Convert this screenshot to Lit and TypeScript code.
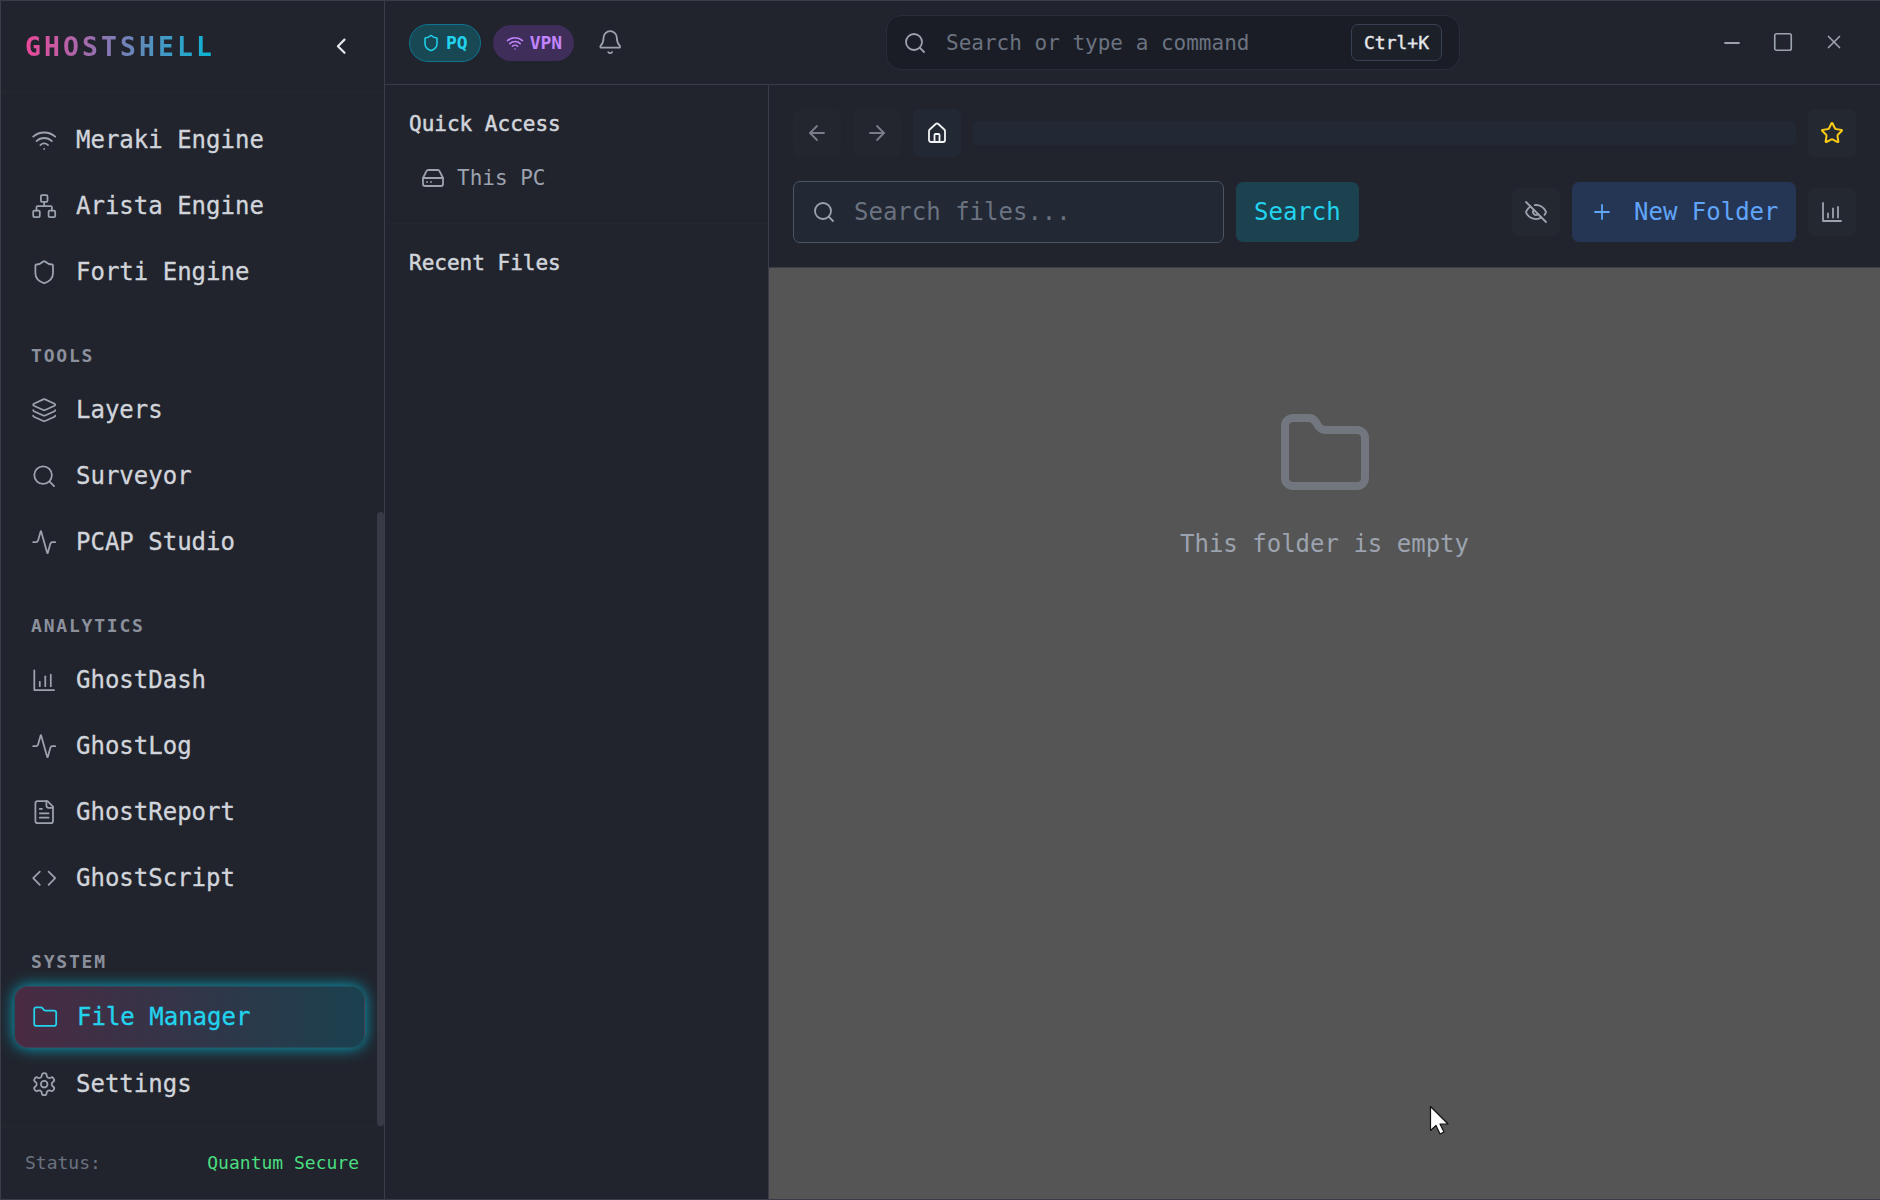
import { LitElement, html, css, svg } from 'lit';
import { customElement } from 'lit/decorators.js';

const ICONS: Record<string, unknown> = {
  wifi: svg`<path d="M12 20h.01"/><path d="M2 8.82a15 15 0 0 1 20 0"/><path d="M5 12.859a10 10 0 0 1 14 0"/><path d="M8.5 16.429a5 5 0 0 1 7 0"/>`,
  network: svg`<rect x="16" y="16" width="6" height="6" rx="1"/><rect x="2" y="16" width="6" height="6" rx="1"/><rect x="9" y="2" width="6" height="6" rx="1"/><path d="M5 16v-3a1 1 0 0 1 1-1h12a1 1 0 0 1 1 1v3"/><path d="M12 12V8"/>`,
  shield: svg`<path d="M20 13c0 5-3.5 7.5-7.66 8.95a1 1 0 0 1-.67-.01C7.5 20.5 4 18 4 13V6a1 1 0 0 1 1-1c2 0 4.5-1.2 6.24-2.72a1.17 1.17 0 0 1 1.52 0C14.51 3.81 17 5 19 5a1 1 0 0 1 1 1z"/>`,
  layers: svg`<path d="M12.83 2.18a2 2 0 0 0-1.66 0L2.6 6.08a1 1 0 0 0 0 1.83l8.58 3.91a2 2 0 0 0 1.66 0l8.58-3.9a1 1 0 0 0 0-1.83z"/><path d="M2 12a1 1 0 0 0 .58.91l8.6 3.91a2 2 0 0 0 1.65 0l8.58-3.9A1 1 0 0 0 22 12"/><path d="M2 17a1 1 0 0 0 .58.91l8.6 3.91a2 2 0 0 0 1.65 0l8.58-3.9A1 1 0 0 0 22 17"/>`,
  search: svg`<circle cx="11" cy="11" r="8"/><path d="m21 21-4.3-4.3"/>`,
  activity: svg`<path d="M22 12h-2.48a2 2 0 0 0-1.93 1.46l-2.35 8.36a.25.25 0 0 1-.48 0L9.24 2.18a.25.25 0 0 0-.48 0l-2.35 8.36A2 2 0 0 1 4.49 12H2"/>`,
  chart: svg`<path d="M3 3v18h18"/><path d="M8 17.5v-4"/><path d="M13 17.5V8.5"/><path d="M18 17.5V7"/>`,
  file: svg`<path d="M15 2H6a2 2 0 0 0-2 2v16a2 2 0 0 0 2 2h12a2 2 0 0 0 2-2V7Z"/><path d="M14 2v4a2 2 0 0 0 2 2h4"/><path d="M10 9H8"/><path d="M16 13H8"/><path d="M16 17H8"/>`,
  code: svg`<path d="m16 18 6-6-6-6"/><path d="m8 6-6 6 6 6"/>`,
  folder: svg`<path d="M20 20a2 2 0 0 0 2-2V8a2 2 0 0 0-2-2h-7.9a2 2 0 0 1-1.69-.9L9.6 3.9A2 2 0 0 0 7.93 3H4a2 2 0 0 0-2 2v13a2 2 0 0 0 2 2Z"/>`,
  settings: svg`<path d="M12.22 2h-.44a2 2 0 0 0-2 2v.18a2 2 0 0 1-1 1.73l-.43.25a2 2 0 0 1-2 0l-.15-.08a2 2 0 0 0-2.73.73l-.22.38a2 2 0 0 0 .73 2.73l.15.1a2 2 0 0 1 1 1.72v.51a2 2 0 0 1-1 1.74l-.15.09a2 2 0 0 0-.73 2.73l.22.38a2 2 0 0 0 2.73.73l.15-.08a2 2 0 0 1 2 0l.43.25a2 2 0 0 1 1 1.73V20a2 2 0 0 0 2 2h.44a2 2 0 0 0 2-2v-.18a2 2 0 0 1 1-1.73l.43-.25a2 2 0 0 1 2 0l.15.08a2 2 0 0 0 2.73-.73l.22-.39a2 2 0 0 0-.73-2.73l-.15-.08a2 2 0 0 1-1-1.74v-.5a2 2 0 0 1 1-1.74l.15-.09a2 2 0 0 0 .73-2.73l-.22-.38a2 2 0 0 0-2.73-.73l-.15.08a2 2 0 0 1-2 0l-.43-.25a2 2 0 0 1-1-1.73V4a2 2 0 0 0-2-2z"/><circle cx="12" cy="12" r="3"/>`,
  bell: svg`<path d="M10.268 21a2 2 0 0 0 3.464 0"/><path d="M3.262 15.326A1 1 0 0 0 4 17h16a1 1 0 0 0 .74-1.673C19.41 13.956 18 12.499 18 8A6 6 0 0 0 6 8c0 4.499-1.411 5.956-2.738 7.326"/>`,
  drive: svg`<path d="M22 12H2"/><path d="M5.45 5.11 2 12v6a2 2 0 0 0 2 2h16a2 2 0 0 0 2-2v-6l-3.45-6.89A2 2 0 0 0 16.76 4H7.24a2 2 0 0 0-1.79 1.11z"/><path d="M6 16h.01"/><path d="M10 16h.01"/>`,
  home: svg`<path d="M14.5 21v-7a1 1 0 0 0-1-1h-3a1 1 0 0 0-1 1v7"/><path d="M4 10a2 2 0 0 1 .709-1.528l6-5.5a2 2 0 0 1 2.582 0l6 5.5A2 2 0 0 1 20 10v9a2 2 0 0 1-2 2H6a2 2 0 0 1-2-2z"/>`,
  star: svg`<path d="M11.525 2.295a.53.53 0 0 1 .95 0l2.31 4.679a2.123 2.123 0 0 0 1.595 1.16l5.166.756a.53.53 0 0 1 .294.904l-3.736 3.638a2.123 2.123 0 0 0-.611 1.878l.882 5.14a.53.53 0 0 1-.771.56l-4.618-2.428a2.122 2.122 0 0 0-1.973 0L6.396 21.01a.53.53 0 0 1-.77-.56l.881-5.139a2.122 2.122 0 0 0-.611-1.879L2.16 9.795a.53.53 0 0 1 .294-.906l5.165-.755a2.122 2.122 0 0 0 1.597-1.16z"/>`,
  eyeOff: svg`<path d="M10.733 5.076a10.744 10.744 0 0 1 11.205 6.575 1 1 0 0 1 0 .696 10.747 10.747 0 0 1-1.444 2.49"/><path d="M14.084 14.158a3 3 0 0 1-4.242-4.242"/><path d="M17.479 17.499a10.75 10.75 0 0 1-15.417-5.151 1 1 0 0 1 0-.696 10.75 10.75 0 0 1 4.446-5.143"/><path d="m2 2 20 20"/>`,
  plus: svg`<path d="M5 12h14"/><path d="M12 5v14"/>`,
  minus: svg`<path d="M5 12h14"/>`,
  square: svg`<rect x="3" y="3" width="18" height="18" rx="2"/>`,
  close: svg`<path d="M18 6 6 18"/><path d="m6 6 12 12"/>`,
  left: svg`<path d="m12 19-7-7 7-7"/><path d="M19 12H5"/>`,
  right: svg`<path d="M5 12h14"/><path d="m12 5 7 7-7 7"/>`,
  chevron: svg`<path d="m15 18-6-6 6-6"/>`,
};

const icon = (name: string, size = 24, stroke = 1.8) => html`<svg
  class="icon"
  width=${size}
  height=${size}
  viewBox="0 0 24 24"
  fill="none"
  stroke="currentColor"
  stroke-width=${stroke}
  stroke-linecap="round"
  stroke-linejoin="round"
>${ICONS[name]}</svg>`;

const NAV = [
  { items: [['wifi', 'Meraki Engine'], ['network', 'Arista Engine'], ['shield', 'Forti Engine']] },
  { title: 'TOOLS', items: [['layers', 'Layers'], ['search', 'Surveyor'], ['activity', 'PCAP Studio']] },
  { title: 'ANALYTICS', items: [['chart', 'GhostDash'], ['activity', 'GhostLog'], ['file', 'GhostReport'], ['code', 'GhostScript']] },
  { title: 'SYSTEM', items: [['folder', 'File Manager'], ['settings', 'Settings']] },
];

@customElement('app-root')
export class AppRoot extends LitElement {
  static styles = css`
    :host {
      box-sizing: border-box;
      display: flex;
      width: 1880px;
      height: 1200px;
      position: relative;
      overflow: hidden;
      border: 1px solid #3a3d47;
      border-right: 0;
      background: #21242d;
      color: #d1d5db;
      font-family: 'DejaVu Sans Mono', 'Liberation Mono', monospace;
    }
    * { box-sizing: border-box; }
    .icon { flex: none; display: block; }

    .sidebar {
      position: relative;
      flex: none;
      width: 384px;
      display: flex;
      flex-direction: column;
      border-right: 1px solid #3a3d47;
    }
    .brand {
      flex: none;
      height: 91px;
      display: flex;
      align-items: center;
      justify-content: space-between;
      padding: 0 30px 0 24px;
      border-bottom: 1px solid #25282f;
    }
    .logo {
      font-size: 26.4px;
      font-weight: 700;
      letter-spacing: 3.1px;
      background: linear-gradient(90deg, #ec4899, #06b6d4);
      -webkit-background-clip: text;
      background-clip: text;
      color: transparent;
    }
    .collapse { color: #e5e7eb; display: flex; }
    .nav {
      flex: 1;
      min-height: 0;
      overflow: hidden;
      padding: 18px 19px 0 13px;
    }
    .group { display: flex; flex-direction: column; gap: 6px; }
    .group + .group { margin-top: 42px; }
    .group-title {
      height: 24px;
      margin-bottom: 6px;
      padding-left: 17px;
      font-size: 18px;
      line-height: 24px;
      font-weight: 700;
      letter-spacing: 1.8px;
      color: #8b909c;
    }
    .item {
      height: 60px;
      display: flex;
      align-items: center;
      gap: 18.6px;
      padding-left: 17px;
      font-size: 24px;
      border-radius: 14px;
      -webkit-text-stroke: 0.3px currentColor;
    }
    .item .icon { color: #9ca3af; }
    .item.active {
      height: 62px;
      border: 1px solid rgba(34, 211, 238, 0.12);
      color: #22d3ee;
      background: linear-gradient(90deg, rgba(236, 72, 153, 0.2), rgba(6, 182, 212, 0.2));
      box-shadow: 0 0 15px rgba(6, 182, 212, 0.9);
    }
    .item.active .icon { color: #22d3ee; }
    .thumb {
      position: absolute;
      right: 0;
      top: 511px;
      width: 7px;
      height: 614px;
      border-radius: 4px;
      background: #383b45;
    }
    .status {
      flex: none;
      height: 73px;
      display: flex;
      align-items: center;
      justify-content: space-between;
      padding: 0 25px 2px 24px;
      border-top: 1px solid #25282f;
      font-size: 18px;
      color: #6b7280;
    }
    .status b { font-weight: 400; color: #4ade80; }

    .body { flex: 1; min-width: 0; display: flex; flex-direction: column; }
    .header {
      flex: none;
      height: 84px;
      display: grid;
      grid-template-columns: 477px 574px 1fr;
      align-items: center;
      padding-left: 24px;
      border-bottom: 1px solid #3a3d47;
    }
    .status-group { display: flex; align-items: center; gap: 12px; }
    .pill {
      display: flex;
      align-items: center;
      gap: 6px;
      height: 36px;
      padding: 0 12px 0 13px;
      border-radius: 19px;
      font-size: 18px;
      font-weight: 700;
    }
    .pill.pq {
      height: 38px;
      padding: 0 12px;
      border: 1px solid #0e7490;
      background: #174854;
      color: #22d3ee;
    }
    .pill.vpn { background: #3f2d5a; color: #c084fc; }
    .bell { color: #9ca3af; margin-left: 11px; display: flex; }
    .command {
      height: 55px;
      display: flex;
      align-items: center;
      gap: 19px;
      padding: 0 17px 0 16px;
      border: 1px solid #2b2e38;
      border-radius: 15px;
      background: #1a1d25;
      font-size: 21px;
      color: #6b7280;
    }
    .command .icon { color: #9ca3af; }
    .kbd {
      margin-left: auto;
      height: 37px;
      padding: 0 12px;
      display: flex;
      align-items: center;
      border: 1px solid #374151;
      border-radius: 7px;
      background: #1c2029;
      color: #e5e7eb;
      font-size: 18px;
      -webkit-text-stroke: 0.4px currentColor;
    }
    .win { display: flex; justify-content: flex-end; padding-right: 21px; color: #9ca3af; }
    .win span { width: 51px; display: flex; justify-content: center; }

    .split { flex: 1; min-height: 0; display: flex; }
    .panel { flex: none; width: 384px; border-right: 1px solid #3a3d47; }
    .panel section { padding: 23px 24px 21px; border-bottom: 1px solid #24272f; }
    .panel section:last-child { padding-top: 23px; border-bottom: 0; }
    .panel h3 {
      margin: 0;
      font-size: 21px;
      line-height: 32px;
      font-weight: 400;
      color: #d1d5db;
      -webkit-text-stroke: 0.5px currentColor;
    }
    .drive {
      height: 48px;
      margin-top: 14px;
      padding-left: 12px;
      display: flex;
      align-items: center;
      gap: 12px;
      font-size: 21px;
      color: #9ca3af;
    }

    .main { flex: 1; min-width: 0; display: flex; flex-direction: column; }
    .toolbar {
      flex: none;
      height: 183px;
      padding: 24px;
      display: flex;
      flex-direction: column;
      gap: 24px;
      border-bottom: 1px solid #3a3d47;
    }
    .row { display: flex; align-items: center; gap: 12px; height: 48px; }
    .row.second { height: 62px; }
    .btn {
      flex: none;
      width: 48px;
      height: 48px;
      display: flex;
      align-items: center;
      justify-content: center;
      border-radius: 7px;
      background: #242831;
      color: #9ca3af;
    }
    .btn.dim { background: #23262e; color: #797d87; }
    .btn.home { background: #222834; color: #f3f4f6; }
    .btn.fav { color: #facc15; }
    .path { flex: 1; height: 24px; border-radius: 5px; background: #222834; }
    .find {
      flex: none;
      width: 431px;
      height: 62px;
      display: flex;
      align-items: center;
      gap: 18px;
      padding-left: 18px;
      border: 1px solid #4b5563;
      border-radius: 7px;
      background: #222834;
      font-size: 24px;
      color: #6b7280;
    }
    .find .icon { color: #9ca3af; }
    .go {
      flex: none;
      height: 60px;
      padding: 0 18px;
      display: flex;
      align-items: center;
      border-radius: 7px;
      background: #1c4250;
      color: #22d3ee;
      font-size: 24px;
    }
    .grow { flex: 1; }
    .new {
      flex: none;
      height: 60px;
      width: 224px;
      display: flex;
      align-items: center;
      gap: 20px;
      padding-left: 18px;
      border-radius: 7px;
      background: #253655;
      color: #60a5fa;
      font-size: 24px;
    }
    .empty {
      flex: 1;
      display: flex;
      flex-direction: column;
      align-items: center;
      gap: 26px;
      padding-top: 138px;
      background: #555555;
      font-size: 24px;
      line-height: 32px;
      color: #9ca3af;
    }
    .empty .icon { color: #72767f; }
    .cursor { position: absolute; left: 1427px; top: 1103px; display: block; }
  `;

  render() {
    return html`
      <aside class="sidebar">
        <div class="brand">
          <span class="logo">GHOSTSHELL</span>
          <span class="collapse">${icon('chevron', 26.4, 2)}</span>
        </div>
        <nav class="nav">
          ${NAV.map(
            (group) => html`
              <div class="group">
                ${group.title ? html`<div class="group-title">${group.title}</div>` : ''}
                ${group.items.map(
                  ([name, label]) => html`
                    <div class="item ${label === 'File Manager' ? 'active' : ''}">
                      ${icon(name, 26.4, 1.6)}<span>${label}</span>
                    </div>
                  `,
                )}
              </div>
            `,
          )}
        </nav>
        <div class="thumb"></div>
        <div class="status"><span>Status:</span><b>Quantum Secure</b></div>
      </aside>

      <div class="body">
        <header class="header">
          <div class="status-group">
            <span class="pill pq">${icon('shield', 18, 2)}PQ</span>
            <span class="pill vpn">${icon('wifi', 18, 2)}VPN</span>
            <span class="bell">${icon('bell', 26.4, 1.6)}</span>
          </div>
          <div class="command">
            ${icon('search', 24)}<span>Search or type a command</span>
            <span class="kbd">Ctrl+K</span>
          </div>
          <div class="win">
            <span>${icon('minus', 24)}</span>
            <span>${icon('square', 22)}</span>
            <span>${icon('close', 22)}</span>
          </div>
        </header>

        <div class="split">
          <div class="panel">
            <section>
              <h3>Quick Access</h3>
              <div class="drive">${icon('drive', 24)}<span>This PC</span></div>
            </section>
            <section><h3>Recent Files</h3></section>
          </div>

          <div class="main">
            <div class="toolbar">
              <div class="row">
                <div class="btn dim">${icon('left', 24)}</div>
                <div class="btn dim">${icon('right', 24)}</div>
                <div class="btn home">${icon('home', 24)}</div>
                <div class="path"></div>
                <div class="btn fav">${icon('star', 24, 2)}</div>
              </div>
              <div class="row second">
                <div class="find">${icon('search', 24)}<span>Search files...</span></div>
                <div class="go">Search</div>
                <div class="grow"></div>
                <div class="btn">${icon('eyeOff', 24)}</div>
                <div class="new">${icon('plus', 24)}<span>New Folder</span></div>
                <div class="btn">${icon('chart', 24)}</div>
              </div>
            </div>
            <div class="empty">
              ${icon('folder', 96, 2)}
              <span>This folder is empty</span>
            </div>
          </div>
        </div>
      </div>

      <svg class="cursor" width="24" height="32" viewBox="0 0 24 32">
        <path d="M2.5 2.5v24l5.5-5 4 8.5 4-2-4-8h8z" fill="#fff" stroke="#111" stroke-width="1.2" stroke-linejoin="round"/>
      </svg>
    `;
  }
}
